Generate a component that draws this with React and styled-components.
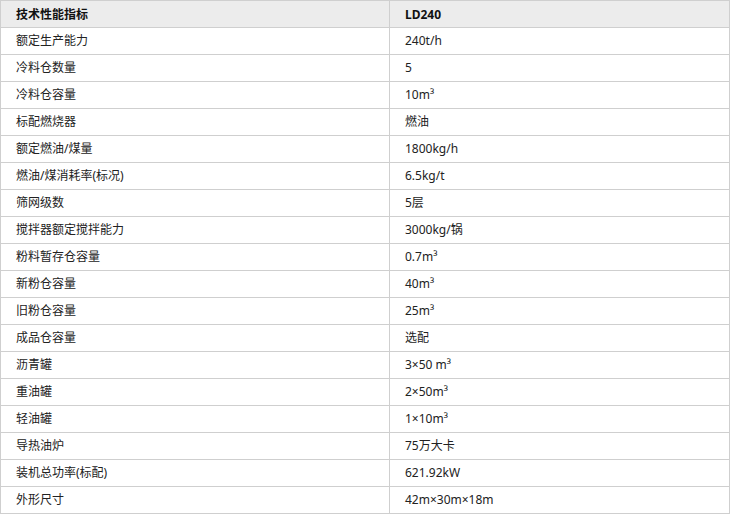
import React from 'react'
import styled, { createGlobalStyle } from 'styled-components'

const GlobalStyle = createGlobalStyle`
  body {
    margin: 0;
    background: #fff;
    font-family: "Noto Sans", "Noto Sans CJK SC", sans-serif;
  }
`

const SpecTable = styled.table`
  width: 730px;
  border-collapse: collapse;
  table-layout: fixed;
  font-size: 12px;
  color: #222;
`

const HeadCell = styled.th`
  height: 26px;
  padding: 0 15px;
  text-align: left;
  font-weight: bold;
  color: #111;
  background: #ececec;
  border: 1px solid #cfcfcf;
  width: ${(p) => (p.$wide ? '358px' : 'auto')};
`

const Cell = styled.td`
  height: 26px;
  padding: 0 15px;
  border: 1px solid #cfcfcf;
  line-height: 16px;
  vertical-align: middle;
  white-space: nowrap;
`

const specs = [
  ['额定生产能力', '240t/h'],
  ['冷料仓数量', '5'],
  ['冷料仓容量', '10m³'],
  ['标配燃烧器', '燃油'],
  ['额定燃油/煤量', '1800kg/h'],
  ['燃油/煤消耗率(标况)', '6.5kg/t'],
  ['筛网级数', '5层'],
  ['搅拌器额定搅拌能力', '3000kg/锅'],
  ['粉料暂存仓容量', '0.7m³'],
  ['新粉仓容量', '40m³'],
  ['旧粉仓容量', '25m³'],
  ['成品仓容量', '选配'],
  ['沥青罐', '3×50 m³'],
  ['重油罐', '2×50m³'],
  ['轻油罐', '1×10m³'],
  ['导热油炉', '75万大卡'],
  ['装机总功率(标配)', '621.92kW'],
  ['外形尺寸', '42m×30m×18m'],
]

const App = () => (
  <>
    <GlobalStyle />
    <SpecTable>
      <thead>
        <tr>
          <HeadCell $wide>技术性能指标</HeadCell>
          <HeadCell>LD240</HeadCell>
        </tr>
      </thead>
      <tbody>
        {specs.map(([name, value]) => (
          <tr key={name}>
            <Cell>{name}</Cell>
            <Cell>{value}</Cell>
          </tr>
        ))}
      </tbody>
    </SpecTable>
  </>
)

export default App
